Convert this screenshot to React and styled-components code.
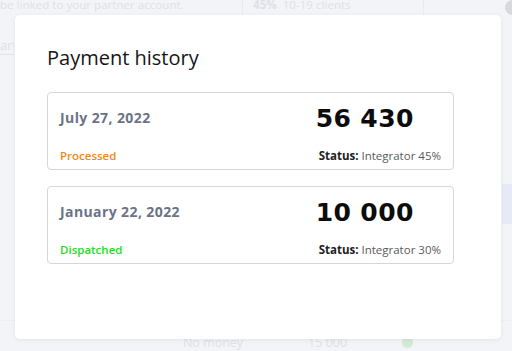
import React from "react";
import styled, { createGlobalStyle } from "styled-components";

const Global = createGlobalStyle`
  html, body { margin: 0; padding: 0; }
  body {
    width: 512px; height: 351px; overflow: hidden;
    font-family: "Open Sans", "Noto Sans", sans-serif;
    background: #f3f4f8;
  }
`;

const Page = styled.div`
  position: relative;
  width: 512px;
  height: 351px;
  overflow: hidden;
  background: #f3f4f8;
  color: #dfe0e6;
`;

const BackTop = styled.div`
  display: grid;
  grid-template-columns: 242px 181px 1fr;
  height: 30px;
  font-size: 11.6px;
  line-height: 14px;
`;

const BackCell = styled.div`
  padding: ${(p) => p.$pad || "0"};
  border-left: ${(p) => (p.$line ? "1px solid #e9eaef" : "none")};
  white-space: nowrap;
  overflow: hidden;
  margin-top: -2px;
`;

const BackLink = styled.div`
  margin-top: 6px;
  font-size: 13px;
  width: 14px;
  overflow: hidden;
  border-bottom: 1px solid #e2e3e8;
  white-space: nowrap;
`;

const BackBottom = styled.div`
  position: absolute;
  left: 0; right: 0; bottom: 0;
  height: 30px;
  display: flex;
  align-items: center;
  font-size: 12.5px;
  border-top: 1px solid #eceef2;
`;

const BackRowText = styled.span`
  margin-left: ${(p) => p.$ml}px;
  margin-top: ${(p) => p.$mt || 0}px;
  white-space: nowrap;
`;

const BackDot = styled.span`
  width: 11px; height: 11px; border-radius: 50%;
  background: #d3ead3;
  margin-left: 55px;
  margin-top: 12px;
`;

const CloseDot = styled.div`
  position: absolute;
  top: 0; right: -8px;
  width: 15px; height: 15px; border-radius: 50%;
  background: #d8d9de;
`;

const SideBlock = styled.div`
  position: absolute;
  right: 0; top: 184px;
  width: 10px; height: 40px;
  background: #e6eaf6;
`;

const Modal = styled.div`
  position: absolute;
  left: 15px; top: 15px;
  width: 486px; height: 324px;
  box-sizing: border-box;
  background: #ffffff;
  border-radius: 5px;
  box-shadow: 0 1px 4px rgba(40, 45, 70, 0.08);
  padding: 30px 47px 0 32px;
  color: #111;
`;

const Title = styled.h2`
  margin: 0 0 21px;
  font-size: 20px;
  font-weight: 500;
  line-height: 26px;
  color: #161616;
`;

const List = styled.div`
  display: flex;
  flex-direction: column;
  gap: 16px;
`;

const Card = styled.div`
  height: 78px;
  box-sizing: border-box;
  border: 1px solid #d3d6dc;
  border-radius: 4px;
  padding: 10px 12px 6px 12px;
  display: flex;
  justify-content: space-between;
`;

const Col = styled.div`
  display: flex;
  flex-direction: column;
  justify-content: space-between;
`;

const DateText = styled.div`
  margin-top: 5px;
  font-size: 14px;
  font-weight: 700;
  letter-spacing: 0.4px;
  color: #6b7387;
`;

const State = styled.div`
  font-size: 11.5px;
  font-weight: 600;
  color: ${(p) => p.$color};
`;

const Amount = styled.div`
  font-family: "DejaVu Sans", sans-serif;
  font-size: 25px;
  font-weight: 700;
  letter-spacing: 0.4px;
  line-height: 32px;
  color: #0c0c0c;
  margin-left: -3px;
`;

const StatusLine = styled.div`
  font-size: 11.5px;
  color: #5a5a5a;
  b { color: #222; font-weight: 700; }
`;

const payments = [
  { date: "July 27, 2022", amount: "56 430", state: "Processed", color: "#f0891d", status: "Integrator 45%" },
  { date: "January 22, 2022", amount: "10 000", state: "Dispatched", color: "#26dc26", status: "Integrator 30%" },
];

export default function App() {
  return (
    <>
      <Global />
      <Page>
        <BackTop>
          <BackCell>be linked to your partner account.</BackCell>
          <BackCell $line $pad="0 0 0 10px"><strong>45%</strong>&nbsp; 10-19 clients</BackCell>
          <BackCell $line />
        </BackTop>
        <BackLink>art</BackLink>
        <CloseDot />
        <SideBlock />
        <BackBottom>
          <BackRowText $ml={24} $mt={-6}>Withdrawn</BackRowText>
          <BackRowText $ml={95} $mt={12}>No money</BackRowText>
          <BackRowText $ml={65} $mt={12}>15 000</BackRowText>
          <BackDot />
        </BackBottom>
        <Modal>
          <Title>Payment history</Title>
          <List>
            {payments.map((p) => (
              <Card key={p.date}>
                <Col>
                  <DateText>{p.date}</DateText>
                  <State $color={p.color}>{p.state}</State>
                </Col>
                <Col>
                  <Amount>{p.amount}</Amount>
                  <StatusLine><b>Status:</b> {p.status}</StatusLine>
                </Col>
              </Card>
            ))}
          </List>
        </Modal>
      </Page>
    </>
  );
}
